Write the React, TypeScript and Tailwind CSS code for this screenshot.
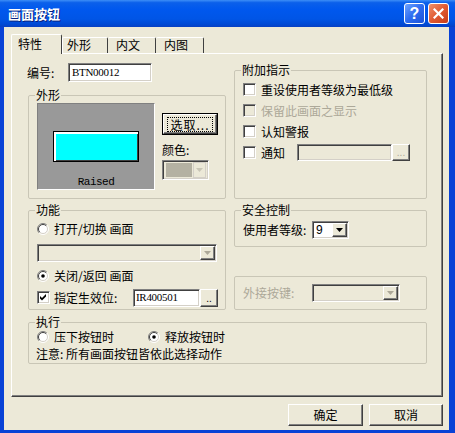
import React from "react";

const sunken =
  "border border-t-[#808080] border-l-[#808080] border-r-white border-b-white shadow-[inset_1px_1px_0_#404040,inset_-1px_-1px_0_#d4d0c8]";
const raised =
  "border border-t-white border-l-white border-r-[#404040] border-b-[#404040] shadow-[inset_-1px_-1px_0_#808080]";

function Arrow({ color }: { color: string }) {
  return (
    <svg width="7" height="4" viewBox="0 0 7 4">
      <path d="M0 0h7L3.5 4z" fill={color} />
    </svg>
  );
}

function Group({
  label,
  className,
  children,
}: {
  label?: string;
  className: string;
  children?: React.ReactNode;
}) {
  return (
    <div className={`relative border border-[#c9c6b6] rounded-[2px] ${className}`}>
      {label && (
        <span className="absolute left-[6px] top-[-8px] bg-[#ece9d8] px-[1px] leading-[14px]">
          {label}
        </span>
      )}
      {children}
    </div>
  );
}

function Check({ checked, disabled }: { checked?: boolean; disabled?: boolean }) {
  return (
    <span
      className={`inline-flex w-[13px] h-[13px] shrink-0 items-center justify-center ${sunken} ${
        disabled ? "bg-[#ece9d8]" : "bg-white"
      }`}
    >
      {checked && (
        <svg width="7" height="7" viewBox="0 0 7 7">
          <path d="M0 2 L2 4 L6 0 L6 2.6 L2 6.6 L0 4.6 Z" fill="#000" />
        </svg>
      )}
    </span>
  );
}

function Radio({ checked }: { checked?: boolean }) {
  return (
    <svg width="12" height="12" viewBox="0 0 12 12" className="shrink-0">
      <circle cx="6" cy="6" r="5" fill="#fff" />
      <path d="M2.1 9.9 A5.5 5.5 0 0 1 9.9 2.1" fill="none" stroke="#808080" strokeWidth="1" />
      <path d="M9.9 2.1 A5.5 5.5 0 0 1 2.1 9.9" fill="none" stroke="#ffffff" strokeWidth="1" />
      <path d="M2.8 9.2 A4.5 4.5 0 0 1 9.2 2.8" fill="none" stroke="#404040" strokeWidth="1" />
      <path d="M9.2 2.8 A4.5 4.5 0 0 1 2.8 9.2" fill="none" stroke="#d4d0c8" strokeWidth="1" />
      {checked && <circle cx="6" cy="6" r="1.8" fill="#000" />}
    </svg>
  );
}

function Combo({
  className,
  value,
  disabled,
}: {
  className: string;
  value?: string;
  disabled?: boolean;
}) {
  return (
    <div
      className={`flex items-stretch p-[1px] ${sunken} ${
        disabled ? "bg-[#ece9d8]" : "bg-white"
      } ${className}`}
    >
      <div className="flex-1 flex items-center pl-[2px] leading-none font-['Liberation_Sans',sans-serif] text-[12px]">
        {value}
      </div>
      <div className={`w-[15px] flex items-center justify-center bg-[#ece9d8] ${raised}`}>
        <Arrow color={disabled ? "#aca899" : "#000"} />
      </div>
    </div>
  );
}

function DotsButton({ label, disabled }: { label: string; disabled?: boolean }) {
  return (
    <div
      className={`w-[18px] h-full flex items-end justify-center pb-[2px] bg-[#ece9d8] ${raised} text-[10px] leading-none font-['Liberation_Sans',sans-serif] ${
        disabled ? "text-[#aca899]" : "text-black"
      }`}
    >
      {label}
    </div>
  );
}

export default function App() {
  return (
    <div className="w-[455px] h-[433px] flex flex-col bg-[#0842d6] text-[12px] text-black overflow-hidden font-['Noto_Sans_CJK_SC','Liberation_Sans',sans-serif]">
      {/* Title bar */}
      <div className="h-[27px] shrink-0 flex items-center pl-[8px] pr-[6px] bg-[linear-gradient(to_bottom,#3d8ef7_0%,#0b60ea_10%,#0058ee_35%,#0055e6_70%,#0049d4_90%,#0840c2_100%)]">
        <span className="text-white font-bold text-[13px] leading-none [text-shadow:1px_1px_0_#0a1f7a]">
          画面按钮
        </span>
        <div className="flex-1" />
        <div className="flex gap-[3px]">
          <div className="w-[21px] h-[21px] rounded-[3px] border border-white flex items-center justify-center bg-[linear-gradient(135deg,#6ea3ff_0%,#2d6cf0_50%,#1d52d8_100%)]">
            <span className="text-white font-bold text-[16px] leading-none font-['Liberation_Sans',sans-serif]">
              ?
            </span>
          </div>
          <div className="w-[21px] h-[21px] rounded-[3px] border border-white flex items-center justify-center bg-[linear-gradient(135deg,#f0906a_0%,#e05a32_50%,#c63c1a_100%)]">
            <svg width="11" height="11" viewBox="0 0 11 11">
              <path d="M1.5 1.5 L9.5 9.5 M9.5 1.5 L1.5 9.5" stroke="#fff" strokeWidth="2.2" strokeLinecap="square" />
            </svg>
          </div>
        </div>
      </div>

      {/* Body */}
      <div className="flex-1 flex flex-col bg-[#ece9d8] ml-[4px] mr-[6px] mb-[3px] pl-[7px] pt-[7px]">
        {/* Tabs */}
        <div className="flex items-end h-[19px]">
          <div className="relative z-10 w-[51px] h-[20px] -mb-px bg-[#ece9d8] border-t border-l border-r border-t-white border-l-white border-r-[#404040] rounded-t-[2px] pl-[6px] pt-[2px] leading-[14px]">
            特性
          </div>
          <div className="w-[46px] h-[16px] bg-[#ece9d8] border-t border-l border-r border-t-white border-l-white border-r-[#404040] rounded-t-[2px] pl-[4px] leading-[14px]">
            外形
          </div>
          <div className="w-[48px] h-[16px] bg-[#ece9d8] border-t border-r border-t-white border-r-[#404040] rounded-t-[2px] pl-[8px] leading-[14px]">
            内文
          </div>
          <div className="w-[48px] h-[16px] bg-[#ece9d8] border-t border-r border-t-white border-r-[#404040] rounded-t-[2px] pl-[8px] leading-[14px]">
            内图
          </div>
        </div>

        {/* Panel */}
        <div className="w-[432px] h-[344px] flex flex-col border border-t-white border-l-white border-r-[#404040] border-b-[#404040] shadow-[inset_-1px_-1px_0_#808080] pl-[16px] pr-[15px]">
          <div className="flex gap-[8px]">
            {/* Left column */}
            <div className="w-[198px] flex flex-col">
              <div className="mt-[9px] h-[19px] flex items-center">
                <span className="-ml-[1px] w-[41px] leading-none">编号:</span>
                <div className={`w-[84px] h-[19px] bg-white ${sunken} flex items-center pl-[3px] font-['Liberation_Serif',serif] text-[11px] tracking-[-0.3px]`}>
                  BTN00012
                </div>
              </div>

              <Group label="外形" className="mt-[13px] h-[104px]">
                <div className="flex pt-[7px] pl-[8px]">
                  <div className="w-[118px] h-[87px] bg-[#999999] border border-t-[#808080] border-l-[#808080] border-r-white border-b-white flex flex-col items-center">
                    <div className="mt-[27px] w-[86px] h-[31px] bg-[#00ffff] border border-black shadow-[inset_1px_1px_0_#fff,inset_2px_2px_0_#fff,inset_-1px_-1px_0_#404040]" />
                    <div className="mt-[13px] leading-[14px] font-['Liberation_Mono',monospace] text-[11px] tracking-[-0.5px] text-black">
                      Raised
                    </div>
                  </div>
                  <div className="ml-[7px] flex flex-col">
                    <div className="mt-[10px] w-[56px] h-[22px] border border-black">
                      <div className={`w-full h-full bg-[#ece9d8] ${raised} flex items-center justify-center`}>
                        <div className="px-[2px] border border-dotted border-black leading-[13px] tracking-[1px]">
                          选取...
                        </div>
                      </div>
                    </div>
                    <div className="mt-[8px] leading-[14px]">颜色:</div>
                    <div className={`mt-[3px] w-[47px] h-[20px] flex items-center p-[1px] bg-[#ece9d8] ${sunken}`}>
                      <div className="ml-[2px] w-[26px] h-[14px] bg-[#b4b1a2]" />
                      <div className="flex-1" />
                      <div className="mr-[1px] w-[13px] h-[16px] border border-[#d4d0c8] flex items-center justify-center">
                        <Arrow color="#c9c6b6" />
                      </div>
                    </div>
                  </div>
                </div>
              </Group>

              <Group label="功能" className="mt-[11px] h-[100px]">
                <div className="flex flex-col pl-[8px] pt-[8px]">
                  <div className="h-[20px] flex items-center gap-[5px]">
                    <Radio />
                    <span className="leading-none">打开/切换 画面</span>
                  </div>
                  <Combo className="mt-[5px] w-[180px] h-[18px]" disabled />
                  <div className="mt-[4px] h-[20px] flex items-center gap-[5px]">
                    <Radio checked />
                    <span className="leading-none">关闭/返回 画面</span>
                  </div>
                  <div className="mt-[2px] h-[19px] flex items-center">
                    <Check checked />
                    <span className="ml-[4px] w-[79px] leading-none">指定生效位:</span>
                    <div className={`w-[67px] h-[18px] bg-white ${sunken} flex items-center pl-[2px] font-['Liberation_Serif',serif] text-[11px] tracking-[-0.3px]`}>
                      IR400501
                    </div>
                    <div className="h-[18px]">
                      <DotsButton label=".." />
                    </div>
                  </div>
                </div>
              </Group>
            </div>

            {/* Right column */}
            <div className="w-[193px] flex flex-col">
              <Group label="附加指示" className="mt-[16px] h-[129px]">
                <div className="flex flex-col pl-[8px] pt-[8px]">
                  <div className="h-[21px] flex items-center gap-[5px]">
                    <Check />
                    <span className="leading-none">重设使用者等级为最低级</span>
                  </div>
                  <div className="h-[21px] flex items-center gap-[5px]">
                    <Check disabled />
                    <span className="leading-none text-[#aca899]">保留此画面之显示</span>
                  </div>
                  <div className="h-[21px] flex items-center gap-[5px]">
                    <Check />
                    <span className="leading-none">认知警报</span>
                  </div>
                  <div className="h-[21px] flex items-center">
                    <Check />
                    <span className="ml-[5px] w-[36px] leading-none">通知</span>
                    <div className={`w-[95px] h-[17px] bg-[#ece9d8] ${sunken}`} />
                    <div className="h-[17px]">
                      <DotsButton label="..." disabled />
                    </div>
                  </div>
                </div>
              </Group>

              <Group label="安全控制" className="mt-[11px] h-[37px]">
                <div className="h-full flex items-center pl-[8px] pt-[2px]">
                  <span className="w-[69px] leading-none">使用者等级:</span>
                  <Combo className="w-[37px] h-[18px]" value="9" />
                </div>
              </Group>

              <Group className="mt-[29px] h-[34px]">
                <div className="h-full flex items-center pl-[8px]">
                  <span className="w-[69px] leading-none text-[#aca899]">外接按键:</span>
                  <Combo className="w-[88px] h-[18px]" disabled />
                </div>
              </Group>
            </div>
          </div>

          <Group label="执行" className="mt-[12px] h-[42px] w-[399px]">
            <div className="flex flex-col pl-[8px] pt-[5px]">
              <div className="h-[17px] flex items-center">
                <div className="w-[111px] flex items-center gap-[5px]">
                  <Radio />
                  <span className="leading-none">压下按钮时</span>
                </div>
                <div className="flex items-center gap-[5px]">
                  <Radio checked />
                  <span className="leading-none">释放按钮时</span>
                </div>
              </div>
              <div className="h-[18px] -ml-[1px] flex items-center leading-none">
                注意: 所有画面按钮皆依此选择动作
              </div>
            </div>
          </Group>
        </div>

        {/* Bottom buttons */}
        <div className="w-[432px] mt-[7px] flex justify-end gap-[6px]">
          <div className={`w-[75px] h-[22px] bg-[#ece9d8] ${raised} flex items-center justify-center leading-none`}>
            确定
          </div>
          <div className={`w-[74px] h-[22px] bg-[#ece9d8] ${raised} flex items-center justify-center leading-none`}>
            取消
          </div>
        </div>
      </div>
    </div>
  );
}
